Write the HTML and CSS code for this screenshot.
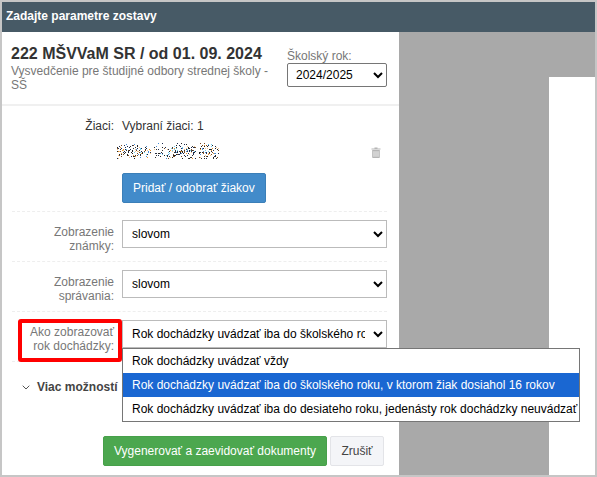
FILE: index.html
```html
<!DOCTYPE html>
<html lang="sk">
<head>
    <meta charset="UTF-8">
    <title>Zadajte parametre zostavy</title>
    <link rel="stylesheet" href="styles.css">
</head>
<body>
    <div class="window">
        <div class="window-title">Zadajte parametre zostavy</div>
        <div class="window-body">
            <div class="panel">
                <div class="report-head">
                    <div class="report-info">
                        <h1>222 MŠVVaM SR / od 01. 09. 2024</h1>
                        <p>Vysvedčenie pre študijné odbory strednej školy - SŠ</p>
                    </div>
                    <div class="year-field">
                        <label>Školský rok:</label>
                        <select class="year-select"><option>2024/2025</option></select>
                    </div>
                </div>
                <div class="form">
                    <div class="row row-students">
                        <div class="row-label">Žiaci:</div>
                        <div class="row-value">
                            <div class="students-count">Vybraní žiaci: 1</div>
                            <div class="student-line">
                                <svg id="noise" class="noise" width="102" height="20" viewBox="0 0 102 20"></svg>
                                <svg class="trash" width="10" height="11" viewBox="0 0 10 11">
                                    <path d="M3.5 .5h3v1h3v1H.5v-1h3z" fill="#b5b5b5"/>
                                    <path d="M1.2 3h7.6v7.2a.8.8 0 0 1-.8.8H2a.8.8 0 0 1-.8-.8z" fill="#b5b5b5"/>
                                    <path d="M3 4.2v5.6M5 4.2v5.6M7 4.2v5.6" stroke="#fff" stroke-width=".8"/>
                                </svg>
                            </div>
                            <button class="btn btn-blue">Pridať / odobrať žiakov</button>
                        </div>
                    </div>
                    <div class="row row-select">
                        <div class="row-label">Zobrazenie<br>známky:</div>
                        <select class="field"><option>slovom</option></select>
                    </div>
                    <div class="row row-select">
                        <div class="row-label">Zobrazenie<br>správania:</div>
                        <select class="field"><option>slovom</option></select>
                    </div>
                    <div class="row row-select">
                        <div class="row-label highlighted">Ako zobrazovať<br>rok dochádzky:</div>
                        <select class="field"><option>Rok dochádzky uvádzať iba do školského roku, v ktorom žiak dosiahol 16 rokov</option></select>
                    </div>
                </div>
                <div class="more">
                    <svg width="8" height="5" viewBox="0 0 8 5"><path d="M.7 .7 4 4l3.3-3.3" fill="none" stroke="#555" stroke-width="1"/></svg>
                    <span>Viac možností</span>
                </div>
                <div class="actions">
                    <button class="btn btn-green">Vygenerovať a zaevidovať dokumenty</button>
                    <button class="btn btn-light">Zrušiť</button>
                </div>
            </div>
            <div class="preview">
                <div class="page"></div>
            </div>
        </div>
        <ul class="dropdown">
            <li>Rok dochádzky uvádzať vždy</li>
            <li class="selected">Rok dochádzky uvádzať iba do školského roku, v ktorom žiak dosiahol 16 rokov</li>
            <li>Rok dochádzky uvádzať iba do desiateho roku, jedenásty rok dochádzky neuvádzať</li>
        </ul>
    </div>
    <script src="noise.js"></script>
</body>
</html>
```

FILE: styles.css
```css
* {
    box-sizing: border-box;
}

html, body {
    margin: 0;
    height: 100%;
    overflow: hidden;
}

body {
    font-family: "Liberation Sans", Arial, sans-serif;
    font-size: 12px;
    color: #333;
    background: #fff;
}

.window {
    position: relative;
    display: flex;
    flex-direction: column;
    width: 597px;
    height: 477px;
    border: 2px solid #c6c6c6;
}

.window-title {
    height: 30px;
    flex: none;
    padding: 0 4px;
    line-height: 28px;
    font-weight: bold;
    color: #fff;
    background: #475a66;
}

.window-body {
    display: flex;
    flex: 1;
    min-height: 0;
}

.panel {
    width: 397px;
    flex: none;
    background: #fff;
}

.report-head {
    display: flex;
    justify-content: space-between;
    height: 74px;
    padding: 13px 12px 0 9px;
    border-bottom: 2px solid #f0f0f0;
}

.report-info {
    width: 262px;
}

.report-info h1 {
    margin: 0;
    font-size: 16px;
    line-height: 18px;
    color: #333;
}

.report-info p {
    margin: 1px 0 0;
    line-height: 14px;
    color: #777;
}

.year-field label {
    display: block;
    margin-top: 4px;
    line-height: 14px;
    color: #777;
}

.year-select {
    display: block;
    width: 100px;
    height: 24px;
    padding: 0 4px;
    font: 12px "Liberation Sans", Arial, sans-serif;
    color: #000;
    background: #fff;
    border: 1px solid #767676;
    border-radius: 2px;
}

.form {
    padding: 0 12px 0 10px;
}

.row {
    display: flex;
    gap: 8px;
    border-bottom: 1px dashed #eee;
}

.row-label {
    width: 102px;
    flex: none;
    text-align: right;
    line-height: 14px;
    color: #777;
}

.row-students {
    height: 106px;
    padding-top: 13px;
}

.row-students .row-label {
    color: #333;
}

.row-value {
    flex: 1;
}

.students-count {
    line-height: 14px;
}

.student-line {
    display: flex;
    align-items: center;
    justify-content: space-between;
    height: 20px;
    margin: 7px 0 13px -5px;
    padding-right: 6px;
}

.trash {
    margin-top: 4px;
}

.btn {
    height: 30px;
    padding: 0 10px;
    font: 12px "Liberation Sans", Arial, sans-serif;
    border: 1px solid transparent;
    border-radius: 2px;
}

.btn-blue {
    color: #fff;
    background: #428bca;
    border-color: #3b7fb8;
}

.row-select {
    height: 50px;
    padding-top: 8px;
}

.row-select .row-label {
    margin-top: 5px;
}

.field {
    flex: 1;
    min-width: 0;
    height: 28px;
    padding: 0 5px;
    font: 12px "Liberation Sans", Arial, sans-serif;
    color: #000;
    background: #fff;
    border: 1px solid #bbb;
}

.highlighted {
    position: relative;
}

.highlighted::before {
    content: "";
    position: absolute;
    left: 6px;
    top: -6px;
    right: -8px;
    bottom: -1px;
    border: 4px solid #f00;
    border-radius: 3px;
}

.more {
    display: flex;
    align-items: center;
    gap: 7px;
    height: 26px;
    margin-top: 12px;
    padding-left: 20px;
    font-weight: bold;
    color: #444;
}

.actions {
    display: flex;
    justify-content: flex-end;
    gap: 3px;
    margin-top: 36px;
    padding-right: 15px;
}

.btn-green {
    color: #fff;
    background: #4ca74f;
    border-color: #47a04a;
}

.btn-light {
    width: 54px;
    padding: 0;
    color: #444;
    background: #f4f5f8;
    border-color: #e3e4e8;
}

.preview {
    flex: 1;
    display: flex;
    justify-content: flex-end;
    padding-top: 45px;
    background: #a9a9a9;
}

.page {
    width: 46px;
    background: #fff;
}

.dropdown {
    position: absolute;
    left: 120px;
    top: 346px;
    width: 458px;
    margin: 0;
    padding: 0;
    list-style: none;
    background: #fff;
    border: 1px solid #767676;
}

.dropdown li {
    height: 24px;
    padding: 0 9px;
    line-height: 24px;
    color: #000;
    white-space: nowrap;
}

.dropdown li.selected {
    color: #fff;
    background: #1a67d2;
}
```

FILE: noise.js
```js
// blurred-out pupil name, drawn as scattered coloured pixels
var svg = document.getElementById('noise');
var colors = ['#1d2b4f', '#333', '#e8952f', '#4a90d9', '#7a4a20', '#6fd0f0', '#222', '#f3c48a', '#1d2b4f', '#222'];
var seed = 7;

function rnd() {
    seed = (seed * 16807) % 2147483647;
    return seed / 2147483647;
}

for (var i = 0; i < 800; i++) {
    var x = Math.floor(rnd() * 102);
    var y = Math.floor(rnd() * 18) + 1;
    var mid = Math.abs(y - 11);
    if (rnd() * 9 < mid) continue;
    if ((x > 33 && x < 37) || (x > 78 && x < 82)) continue;
    var r = document.createElementNS('http://www.w3.org/2000/svg', 'rect');
    r.setAttribute('x', x);
    r.setAttribute('y', y);
    r.setAttribute('width', 1);
    r.setAttribute('height', 1);
    r.setAttribute('fill', colors[Math.floor(rnd() * colors.length)]);
    svg.appendChild(r);
}
```
